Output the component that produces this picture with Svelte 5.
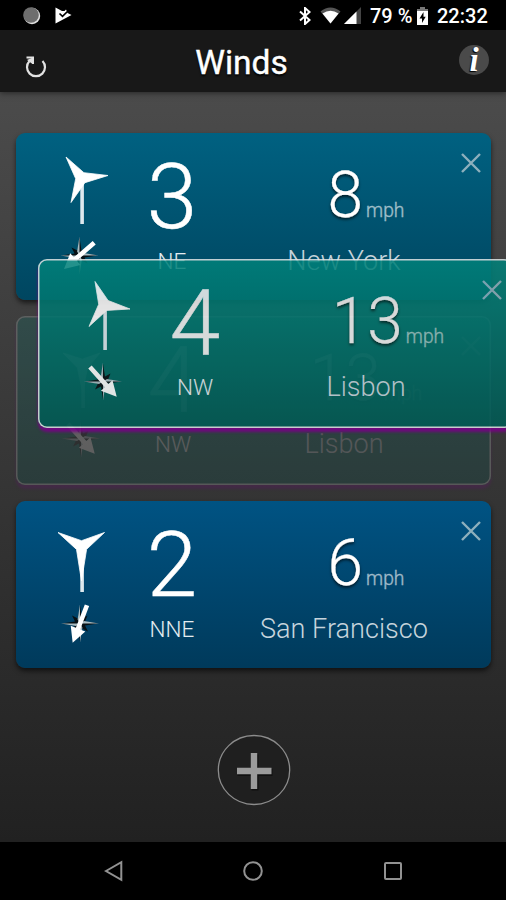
<script>
  const cards = [
    {
      id: 'ny', level: '3', dir: 'NE', speed: '8', city: 'New York', angle: 49,
      top: '#006181', bottom: '#004660',
      hub: [65.5, 45], tips: [[50, 24], [92, 42.5], [55, 69.5]], tower: 91, star: [63.5, 122.5]
    },
    {
      id: 'ghost', ghost: true, level: '4', dir: 'NW', speed: '13', city: 'Lisbon', angle: -42,
      top: '#008079', bottom: '#005852',
      hub: [66.5, 49], tips: [[47, 37], [84, 37], [66.5, 76]], tower: 92, star: [65, 122.5]
    },
    {
      id: 'sf', level: '2', dir: 'NNE', speed: '6', city: 'San Francisco', angle: 21,
      top: '#005383', bottom: '#003a5b',
      hub: [65.5, 45.5], tips: [[42, 31.5], [88.5, 31.5], [65.5, 80]], tower: 91, star: [64, 122.5]
    }
  ];

  const dragged = {
    id: 'drag', drag: true, level: '4', dir: 'NW', speed: '13', city: 'Lisbon', angle: -42,
    top: '#00827b', bottom: '#005a54',
    hub: [66.5, 46], tips: [[57, 22.5], [92, 50], [51, 67.5]], tower: 91, star: [65, 122.5]
  };

  // three tapered blades: each tip joined by a waist point on the bisector between neighbours
  function blades({ hub: [hx, hy], tips }) {
    const unit = (p) => {
      const x = p[0] - hx, y = p[1] - hy, l = Math.hypot(x, y);
      return [x / l, y / l];
    };
    let d = `M${tips[0].join(' ')}`;
    tips.forEach((t, i) => {
      const n = tips[(i + 1) % 3];
      const a = unit(t), b = unit(n);
      const x = a[0] + b[0], y = a[1] + b[1], l = Math.hypot(x, y);
      d += ` L${(hx + (x / l) * 5.8).toFixed(1)} ${(hy + (y / l) * 5.8).toFixed(1)} L${n.join(' ')}`;
    });
    return d + 'Z';
  }
</script>

{#snippet card(c)}
  <article class="card" class:ghost={c.ghost} class:drag={c.drag} style="--top:{c.top};--bottom:{c.bottom}">
    <svg class="icons" viewBox="34 0 60 150" width="60" height="150">
      <rect x={c.hub[0] - 1.2} y={c.hub[1]} width="3.6" height={c.tower - c.hub[1]} fill="#dde8ee" />
      <path d={blades(c)} fill="#fff" stroke="#fff" stroke-width="0.8" stroke-linejoin="bevel" />
      <g transform="translate({c.star[0]} {c.star[1]})">
        <path d="M0 -18L2 -5L7.500 -8L5 -2L18 0L5 2L8 8L2 5L0 18L-2 5L-8 8L-5 2L-18 0L-5 -2L-8 -8L-2 -5Z" fill="#071014" />
        <path d="M0 -19L-2.400 -4L0 0ZM19 0L4 -2.400L0 0ZM0 19L2.400 4L0 0ZM-19 0L-4 2.400L0 0Z" fill="#a9bcc2" />
        <g transform="rotate({c.angle})">
          <path d="M-2.3 -19.5H2.3V5.500H7.800L0 20.500L-7.800 5.500H-2.3Z" fill="#fff" />
        </g>
      </g>
    </svg>
    <div class="force">
      <div class="level">{c.level}</div>
      <div class="dir">{c.dir}</div>
    </div>
    <div class="place">
      <div class="speed">{c.speed}<span class="unit">mph</span></div>
      <div class="city">{c.city}</div>
    </div>
    <svg class="close" viewBox="0 0 20 20" width="20" height="20">
      <path d="M1 1L19 19M19 1L1 19" stroke="#8db0bd" stroke-width="2.4" fill="none" />
    </svg>
  </article>
{/snippet}

<div class="screen">
  <div class="status">
    <svg class="dot" viewBox="0 0 18 18" width="18" height="18">
      <circle cx="9" cy="9" r="8.2" fill="#e0e0e0" />
      <circle cx="8" cy="8" r="7.8" fill="#6e6e6e" />
    </svg>
    <svg class="play" viewBox="0 0 17 17" width="17" height="17">
      <path d="M0.500 0.500L7 4L9.500 4L11 2.500L12.500 6L16.500 8L0.500 16.500Z" fill="#fff" />
      <path d="M4.500 6.500L7.500 9.300L14 3" stroke="#000" stroke-width="1.600" fill="none" />
    </svg>
    <span class="fill"></span>
    <svg class="bt" viewBox="0 0 12 18" width="12" height="18">
      <path d="M1 4.500L10.500 13L6 17V1L10.500 5L1 13.500" stroke="#fff" stroke-width="2" fill="none" />
    </svg>
    <svg class="wifi" viewBox="0 0 21 17" width="21" height="17">
      <path d="M0.500 4.500Q10.500 -3.500 20.500 4.500L10.500 16.500Z" fill="#555" />
      <path d="M2.500 6.500Q10.500 1 18.500 6.500L10.500 16.500Z" fill="#fff" />
    </svg>
    <svg class="cell" viewBox="0 0 17 17" width="17" height="17">
      <path d="M0 17L17 0V17Z" fill="#444" />
      <path d="M0 17L12.500 4.500V17Z" fill="#fff" />
    </svg>
    <span class="pct">79 %</span>
    <svg class="bat" viewBox="0 0 11 18" width="11" height="18">
      <path d="M0 2H3V0H8V2H11V5H0Z" fill="#777" />
      <path d="M0 4H11V18H0Z" fill="#fff" />
      <path d="M6.500 5L2.500 11.500H5V16L8.700 9.700H6.500Z" fill="#000" />
    </svg>
    <span class="time">22:32</span>
  </div>

  <header>
    <svg class="reload" viewBox="0 0 24 24" width="24" height="24">
      <path d="M5.500 7A9 9 0 1 0 18.500 7" stroke="#e2e2e2" stroke-width="2.200" fill="none" />
      <path d="M2.500 3.500H9V10" stroke="#e2e2e2" stroke-width="2" fill="none" />
      <path d="M3 6L9 3.500L8.500 10Z" fill="#e2e2e2" />
    </svg>
    <h1>Winds</h1>
    <div class="info">i</div>
  </header>

  <main>
    <div class="list">
      {#each cards as c (c.id)}
        {@render card(c)}
      {/each}
      {@render card(dragged)}
    </div>
    <svg class="add" viewBox="0 0 74 72" width="74" height="72">
      <ellipse cx="37" cy="36" rx="35.700" ry="34.500" fill="#1f1f1f" stroke="#8c8c8c" stroke-width="1.300" />
      <path d="M37 19.500V55.500M19.500 37.500H54.500" stroke="#111" stroke-width="7" transform="translate(1 1)" />
      <path d="M37 19V55M20 37H54.500" stroke="#9b9b9b" stroke-width="6.400" />
    </svg>
  </main>

  <nav>
    <svg viewBox="0 0 20 22" width="20" height="22"><path d="M2 11L17.300 2.200V19.800Z" /></svg>
    <svg viewBox="0 0 20 22" width="20" height="22"><circle cx="10" cy="11" r="8.800" /></svg>
    <svg viewBox="0 0 20 22" width="20" height="22"><rect x="2" y="3" width="16" height="16" rx="1" /></svg>
  </nav>
</div>

<style>
  :global(body) {
    margin: 0;
    background: #000;
  }
  .screen {
    width: 506px;
    height: 900px;
    display: flex;
    flex-direction: column;
    overflow: hidden;
    background: #000;
    color: #fff;
    font-family: Roboto, sans-serif;
  }
  .status {
    height: 30px;
    flex: none;
    display: flex;
    align-items: center;
    box-sizing: border-box;
    padding: 1px 18px 0 23px;
    font-size: 20px;
    line-height: 28px;
    font-weight: 500;
    white-space: nowrap;
  }
  .play { margin-left: 14px; }
  .fill { flex: 1; }
  .wifi { margin-left: 9px; }
  .cell { margin-left: 3px; }
  .pct { width: 41px; margin-left: 9px; }
  .bat { margin-left: 6px; }
  .time { margin-left: 9px; width: 51px; }

  header {
    height: 62px;
    flex: none;
    box-sizing: border-box;
    padding: 0 17px 0 24px;
    display: flex;
    align-items: center;
    justify-content: space-between;
    background: #181818;
    box-shadow: 0 1px 6px rgba(0, 0, 0, 0.5);
    z-index: 1;
  }
  h1 {
    margin: 4px 0 0;
    padding-right: 24px;
    font-size: 33.500px;
    line-height: 40px;
    font-weight: 400;
    -webkit-text-stroke: 0.400px #fff;
    text-shadow: 0 2px 2px #000;
  }
  .reload { margin-top: 10px; }
  .info {
    width: 30px;
    height: 30px;
    border-radius: 50%;
    background: #4a4a4a;
    font: italic 700 33px/30px "Liberation Serif", serif;
    text-align: center;
    text-shadow: -1px 1px 1px #000;
    margin-bottom: 3px;
  }

  main {
    height: 750px;
    flex: none;
    box-sizing: border-box;
    padding: 41px 15px 0 16px;
    display: flex;
    flex-direction: column;
    background: linear-gradient(#4b4b4b, #212121);
    overflow: hidden;
  }
  .list {
    position: relative;
    display: flex;
    flex-direction: column;
    gap: 17px;
  }
  .card {
    position: relative;
    width: 475px;
    height: 167px;
    box-sizing: border-box;
    display: flex;
    border-radius: 9px;
    background: linear-gradient(var(--top), var(--bottom));
    box-shadow: 0 3px 5px rgba(0, 0, 0, 0.6);
  }
  .ghost,
  .drag {
    height: 169px;
    padding: 1px 0 0 1px;
    box-shadow: inset 0 0 0 1.500px #dfe5e5, 0 4px 3px #7a0088;
  }
  .ghost {
    margin: -1px 0;
    opacity: 0.2;
  }
  .drag {
    position: absolute;
    left: 22px;
    top: 126px;
    opacity: 0.86;
    color: #f2f2f2;
  }
  .icons {
    flex: none;
    margin: 0 34px;
  }
  .ghost .icons,
  .drag .icons {
    margin: -1px 34px 0 33px;
  }
  .force {
    width: 56px;
    text-align: center;
    display: flex;
    flex-direction: column;
    align-items: center;
    font-weight: 300;
  }
  .level {
    padding-top: 19px;
    height: 93px;
    font-size: 91px;
    line-height: 90px;
    -webkit-text-stroke: 0.500px currentColor;
  }
  .dir {
    font-size: 22.500px;
    line-height: 33px;
    font-weight: 300;
    color: #e4ecf0;
  }
  .place {
    width: 288px;
    display: flex;
    flex-direction: column;
    align-items: center;
    font-weight: 300;
  }
  .speed {
    margin-left: 44px;
    padding-top: 30px;
    height: 82px;
    font-size: 64px;
    line-height: 65px;
    text-shadow: 0 2px 3px rgba(0, 0, 0, 0.7);
    -webkit-text-stroke: 0.300px currentColor;
    white-space: nowrap;
  }
  .unit {
    margin-left: 3px;
    font-size: 19.300px;
    opacity: 0.62;
    text-shadow: none;
  }
  .city {
    font-size: 27.100px;
    line-height: 32px;
    color: #c6d4dc;
  }
  .ghost .force,
  .drag .force {
    margin: -1px -1px 0 1px;
  }
  .ghost .place,
  .drag .place {
    margin-top: -1px;
  }
  .close {
    position: absolute;
    right: 10px;
    top: 20px;
  }
  .drag .close { right: 11px; top: 21px; }
  .add {
    margin: 66px 0 0 201px;
  }

  nav {
    flex: 1;
    display: flex;
    justify-content: center;
    align-items: center;
    gap: 119.500px;
    background: #000;
  }
  nav svg {
    fill: none;
    stroke: #929292;
    stroke-width: 2;
  }
</style>
